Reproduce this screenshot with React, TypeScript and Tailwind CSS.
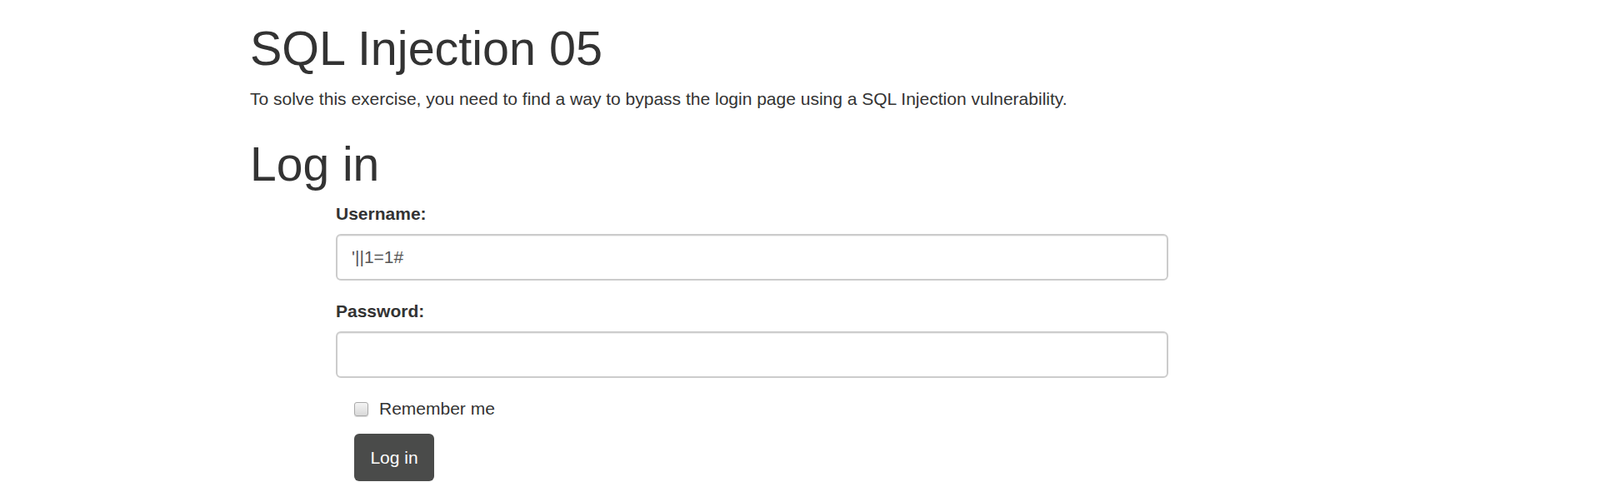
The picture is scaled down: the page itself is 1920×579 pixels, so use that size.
export default function App() {
  return (
    <div className="min-h-screen bg-white font-['Liberation_Sans',Arial,sans-serif] text-[#333]">
      <div className="pl-[300px]">
        {/* Header */}
        <h1 className="pt-[26px] text-[57.5px] leading-[64px] font-normal">SQL Injection 05</h1>
        <p className="mt-[14px] text-[21px] leading-[30px]">
          To solve this exercise, you need to find a way to bypass the login page using a SQL Injection vulnerability.
        </p>
        <h2 className="mt-[31px] text-[57px] leading-[64px] font-normal">Log in</h2>

        {/* Form */}
        <form className="ml-[103px] w-[999px]" onSubmit={(e) => e.preventDefault()}>
          <label className="mt-[14px] block text-[21px] leading-[28px] font-bold">Username:</label>
          <input
            type="text"
            defaultValue="'||1=1#"
            className="mt-[10px] block h-[56px] w-full rounded-[6px] border-2 border-[#ccc] bg-white pl-[17px] text-[21px] text-[#555] shadow-[inset_0_1px_1px_rgba(0,0,0,0.075)] outline-none"
          />
          <label className="mt-[23px] block text-[21px] leading-[28px] font-bold">Password:</label>
          <input
            type="password"
            className="mt-[10px] block h-[56px] w-full rounded-[6px] border-2 border-[#ccc] bg-white pl-[17px] text-[21px] text-[#555] shadow-[inset_0_1px_1px_rgba(0,0,0,0.075)] outline-none"
          />
          <div className="mt-[23px] ml-[22px] flex h-[28px] items-center">
            <span className="h-[17px] w-[17px] rounded-[3px] border border-[#a9a9a9] bg-linear-to-b from-[#f4f4f4] to-[#d9d9d9] shadow-[0_1px_1px_rgba(0,0,0,0.15)]" />
            <span className="ml-[13px] text-[21px] leading-[28px]">Remember me</span>
          </div>
          <button
            type="submit"
            className="mt-[16px] ml-[22px] flex h-[57px] w-[96px] items-center justify-center rounded-[6px] bg-[#4a4b4a] text-[21px] text-white"
          >
            Log in
          </button>
        </form>
      </div>
    </div>
  );
}
